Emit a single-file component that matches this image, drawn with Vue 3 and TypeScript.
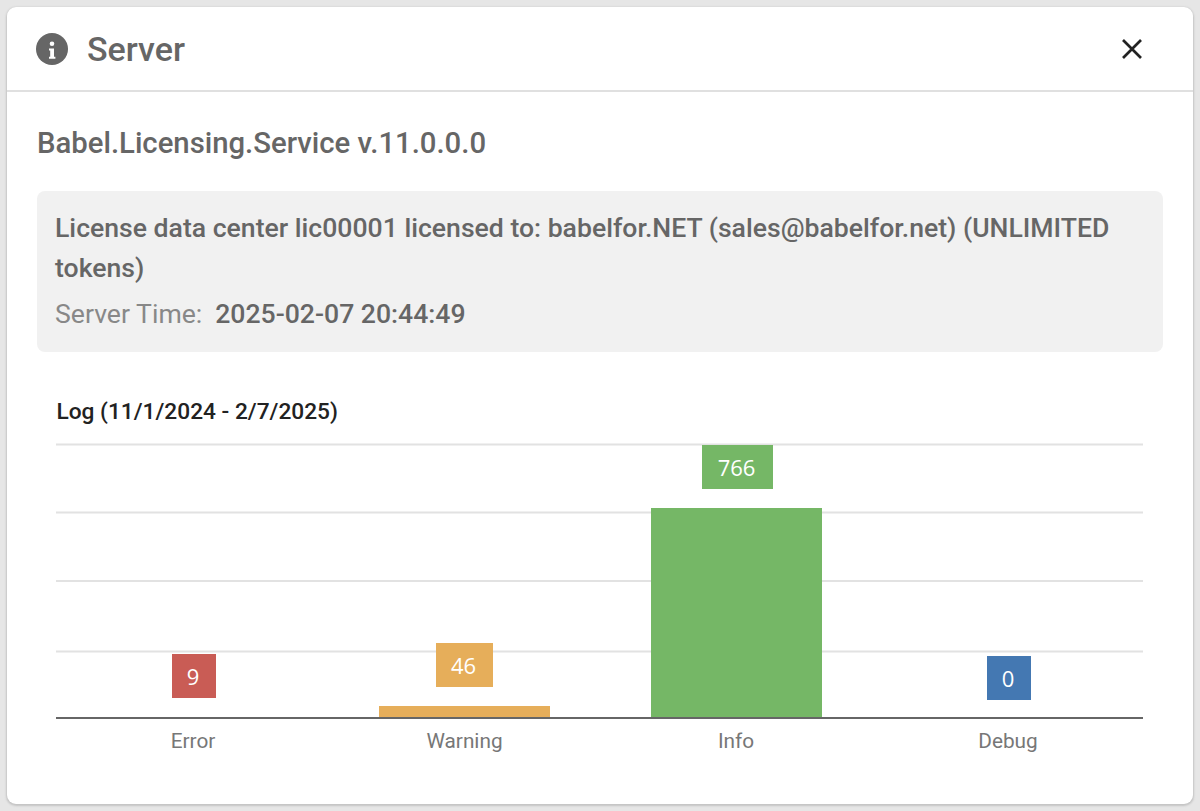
<script setup lang="ts">
interface Item { name: string; value: number; color: string; cx: number; barX: number; barY: number; barW: number; tagX: number; tagY: number; tagW: number }
const grid: number[] = [444.5, 512.5, 581, 651.5]
const items: Item[] = [
  { name: 'Error', value: 9, color: '#c95c55', cx: 193, barX: 108, barY: 718, barW: 0, tagX: 172, tagY: 654, tagW: 44 },
  { name: 'Warning', value: 46, color: '#e6ae5a', cx: 464.5, barX: 379, barY: 706, barW: 171, tagX: 436, tagY: 643, tagW: 57 },
  { name: 'Info', value: 766, color: '#75b766', cx: 736, barX: 651, barY: 508, barW: 171, tagX: 702, tagY: 445, tagW: 71 },
  { name: 'Debug', value: 0, color: '#4478b2', cx: 1008, barX: 923, barY: 718, barW: 0, tagX: 987, tagY: 656, tagW: 44 },
]
</script>

<template>
  <div class="page">
    <section class="card">
      <header class="head">
        <svg class="info" viewBox="0 0 32 32" width="32" height="32" aria-hidden="true">
          <circle cx="16" cy="16" r="16" fill="#666" />
          <circle cx="16" cy="10.7" r="2.3" fill="#fff" />
          <path d="M13 15.4h5v8.4h1.4v2H13v-2h1.2v-6.4H13z" fill="#fff" />
        </svg>
        <h1 class="title">Server</h1>
        <svg class="close" viewBox="0 0 20 20" width="20" height="20" aria-hidden="true">
          <path d="M1 1 19 19M19 1 1 19" stroke="#222" stroke-width="2.7" fill="none" />
        </svg>
      </header>
      <div class="body">
        <h2 class="service">Babel.Licensing.Service v.11.0.0.0</h2>
        <div class="panel">
          <p class="lic">License data center lic00001 licensed to: babelfor.NET (sales@babelfor.net) (UNLIMITED tokens)</p>
          <p class="time"><span class="time-label">Server Time:</span><b>2025-02-07 20:44:49</b></p>
        </div>
      </div>
      <svg class="chart" viewBox="0 394 1186 410" width="1186" height="410">
        <text x="49.5" y="418.5" class="chart-title">Log (11/1/2024 - 2/7/2025)</text>
        <line v-for="y in grid" :key="y" x1="49" x2="1136" :y1="y" :y2="y" stroke="#e2e2e2" stroke-width="2" />
        <g v-for="it in items" :key="it.name">
          <rect :x="it.barX - 7" :y="it.barY" :width="it.barW" :height="718 - it.barY" :fill="it.color" />
          <rect :x="it.tagX - 7" :y="it.tagY" :width="it.tagW" height="44" :fill="it.color" />
          <text :x="it.tagX - 8 + it.tagW / 2" :y="it.tagY + 31" text-anchor="middle" class="tag">{{ it.value }}</text>
          <text :x="it.cx - 7" y="748" text-anchor="middle" class="axis">{{ it.name }}</text>
        </g>
        <line x1="49" x2="1136" y1="718" y2="718" stroke="#666" stroke-width="2" />
      </svg>
    </section>
  </div>
</template>

<style>
html, body { margin: 0; background: #e6e6e6; }
</style>

<style scoped>
.page {
  width: 1200px;
  height: 811px;
  padding: 7px;
  box-sizing: border-box;
  background: #e6e6e6;
  font-family: Roboto, "Liberation Sans", sans-serif;
  overflow: hidden;
}
.card {
  width: 1186px;
  height: 797px;
  background: #fff;
  border-radius: 9px;
  box-shadow: 0 1px 2px 1px #c4c4c4;
  overflow: hidden;
}
.head {
  height: 85px;
  box-sizing: border-box;
  border-bottom: 2px solid #e0e0e0;
  display: flex;
  align-items: center;
  padding: 0 51px 0 29px;
}
.title {
  margin: 0 0 0 19px;
  flex: 1;
  font-size: 34px;
  font-weight: 500;
  color: #666;
}
.body { padding: 29px 30px 0; }
.service {
  margin: 0;
  font-size: 29.3px;
  line-height: 44px;
  font-weight: 500;
  color: #666;
}
.panel {
  margin-top: 26px;
  background: #f1f1f1;
  border-radius: 8px;
  padding: 17px 18px 18px;
  height: 161px;
  box-sizing: border-box;
}
.lic {
  margin: 0;
  font-size: 26.6px;
  line-height: 40px;
  font-weight: 500;
  color: #666;
}
.time {
  margin: 6px 0 0;
  font-size: 26.6px;
  line-height: 40px;
  color: #888;
}
.time-label { margin-right: 13px; }
.time b { font-weight: 500; color: #666; }
.chart { display: block; margin-top: 42px; }
.chart-title { font-size: 22.7px; font-weight: 500; fill: #222; font-family: Roboto, sans-serif; }
.tag { font-size: 22px; fill: #fff; font-family: "Open Sans", sans-serif; }
.axis { font-size: 20.8px; fill: #777; font-family: Roboto, sans-serif; }
</style>
